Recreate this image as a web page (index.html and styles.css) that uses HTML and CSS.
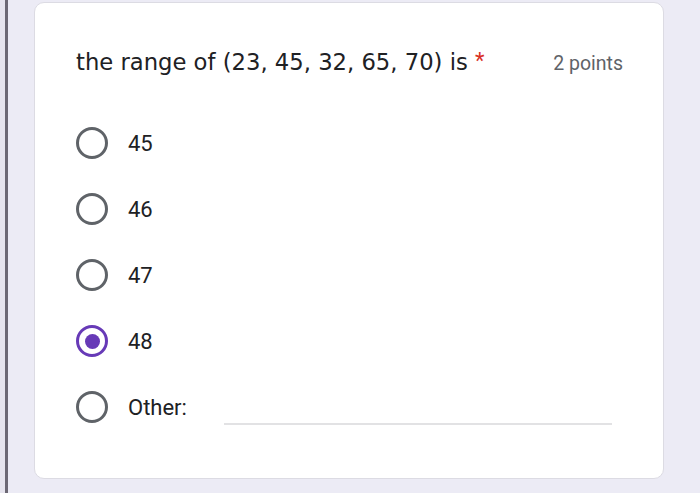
FILE: index.html
```html
<!DOCTYPE html>
<html lang="en">
<head>
<meta charset="utf-8">
<title>Question</title>
<link rel="stylesheet" href="styles.css">
</head>
<body>
<div class="page">
  <div class="edge"></div>
  <div class="bar"></div>
  <main class="card">
    <div class="question">
      <div class="title">the range of (23, 45, 32, 65, 70) is <span class="req">*</span></div>
      <div class="points">2 points</div>
    </div>
    <ul class="options">
      <li class="option"><span class="radio"></span><span class="label">45</span></li>
      <li class="option"><span class="radio"></span><span class="label">46</span></li>
      <li class="option"><span class="radio"></span><span class="label">47</span></li>
      <li class="option"><span class="radio checked"></span><span class="label">48</span></li>
      <li class="option other"><span class="radio"></span><span class="label">Other:</span><span class="line"></span></li>
    </ul>
  </main>
</div>
</body>
</html>
```

FILE: styles.css
```css
* { box-sizing: border-box; }
html, body {
  margin: 0;
  padding: 0;
  width: 700px;
  height: 493px;
  overflow: hidden;
  background: #ecebf5;
}
.page {
  display: flex;
  height: 493px;
}
.edge {
  width: 5px;
  background: #e6e4ee;
}
.bar {
  width: 3px;
  background: #6c6874;
  margin-right: 26px;
}
.card {
  margin-top: 2px;
  width: 630px;
  height: 477px;
  background: #fff;
  border: 1px solid #dcdbe3;
  border-radius: 10px;
  padding: 0 51px 0 41px;
}
.question {
  display: flex;
  justify-content: space-between;
  align-items: baseline;
  padding-top: 43px;
}
.title {
  font-family: "DejaVu Sans", sans-serif;
  font-size: 22.7px;
  line-height: 30px;
  color: #202124;
}
.req {
  color: #d93025;
  font-family: Roboto, sans-serif;
  font-size: 22px;
  vertical-align: 2px;
}
.points {
  font-family: Roboto, sans-serif;
  font-size: 19.5px;
  color: #5f6368;
  margin-right: -11px;
}
.options {
  list-style: none;
  margin: 33px 0 0;
  padding: 0;
}
.option {
  display: flex;
  align-items: center;
  height: 66px;
  font-family: Roboto, sans-serif;
  font-size: 22px;
  color: #202124;
}
.radio {
  flex: none;
  width: 32px;
  height: 32px;
  border: 3px solid #5f6368;
  border-radius: 50%;
  margin-right: 20px;
  display: flex;
  align-items: center;
  justify-content: center;
}
.radio.checked {
  border-color: #673ab7;
}
.radio.checked::after {
  content: "";
  width: 15px;
  height: 15px;
  border-radius: 50%;
  background: #673ab7;
}
.line {
  flex: 1;
  align-self: flex-end;
  height: 2px;
  background: #e2e2e4;
  margin: 0 0 15px 37px;
}
```
